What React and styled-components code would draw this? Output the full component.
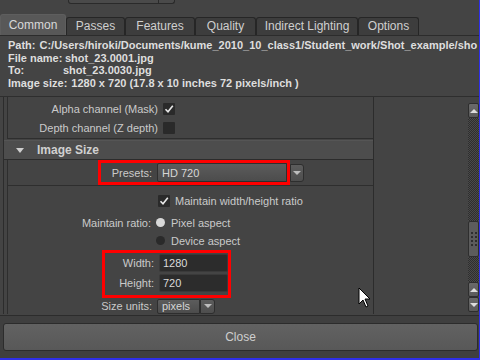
import React from "react";
import styled, { createGlobalStyle } from "styled-components";

const Global = createGlobalStyle`
  html, body { margin: 0; padding: 0; background: #444444; }
  body { font-family: "Liberation Sans", Tahoma, sans-serif; }
`;

const Window = styled.div`
  position: relative;
  width: 480px;
  height: 360px;
  background: #444444;
  display: flex;
  flex-direction: column;
  overflow: hidden;
  box-sizing: border-box;
  border-right: 1px solid #2f2fe8;
`;

const TopStrip = styled.div`
  height: 14px;
  display: flex;
  align-items: flex-start;
`;

const PrevButton = styled.div`
  margin-left: 68px;
  width: 105px;
  height: 3px;
  border: 1px solid #2a2a2a;
  border-top: 0;
  border-radius: 0 0 3px 3px;
  background: #4a4a4a;
  display: flex;
  justify-content: flex-end;
`;

const PrevDivider = styled.div`
  width: 15px;
  border-left: 1px solid #2a2a2a;
`;

const TabRow = styled.div`
  height: 21px;
  display: flex;
  align-items: flex-end;
  border-bottom: 1px solid #2c2c2c;
`;

const Tab = styled.div`
  box-sizing: border-box;
  width: ${(p) => p.w}px;
  height: ${(p) => (p.active ? 21 : 18)}px;
  display: flex;
  align-items: center;
  justify-content: center;
  font-size: 12px;
  color: ${(p) => (p.active ? "#d8d8d8" : "#cfcfcf")};
  background: ${(p) => (p.active ? "#585858" : "#3d3d3d")};
  border: 1px solid ${(p) => (p.active ? "#5e5e5e" : "#262626")};
  border-bottom: 0;
  border-radius: 3px 3px 0 0;
`;

const Info = styled.div`
  height: 61px;
  padding: 3px 0 0 8px;
  box-sizing: border-box;
  display: flex;
  flex-direction: column;
  font-size: 11px;
  font-weight: bold;
  color: #dedede;
  line-height: 12.7px;
  white-space: nowrap;
  overflow: hidden;
`;

const InfoLine = styled.div`
  display: flex;
`;

const InfoKey = styled.span`
  width: ${(p) => (p.w ? p.w + "px" : "auto")};
  margin-right: ${(p) => (p.w ? 0 : 4)}px;
`;

const ScrollRow = styled.div`
  height: 219px;
  display: flex;
  border-top: 1px solid #2e2e2e;
`;

const Content = styled.div`
  flex: 1;
  display: flex;
  flex-direction: column;
  padding-left: 3px;
  overflow: hidden;
`;

const Outer = styled.div`
  width: 369px;
  flex: 1;
  border-left: 1px solid #2c2c2c;
  border-right: 1px solid #2c2c2c;
  display: flex;
  flex-direction: column;
`;

const TopFrame = styled.div`
  height: 42px;
  margin-left: 3px;
  border-left: 1px solid #2e2e2e;
  border-bottom: 1px solid #2e2e2e;
  display: flex;
  flex-direction: column;
  justify-content: center;
  gap: 4px;
  padding-top: 2px;
  box-sizing: border-box;
`;

const Row = styled.div`
  display: flex;
  align-items: center;
  height: ${(p) => p.h || 15}px;
  margin-top: ${(p) => p.mt || 0}px;
  font-size: 11px;
  color: #cacaca;
`;

const Label = styled.div`
  width: ${(p) => p.w || 148}px;
  text-align: right;
  padding-right: 5px;
  box-sizing: border-box;
  white-space: nowrap;
`;

const Check = styled.div`
  width: 12px;
  height: 12px;
  background: #2a2a2a;
  border-radius: 1px;
  display: flex;
  align-items: center;
  justify-content: center;
  margin-right: 5px;
  flex: none;
`;

const Header = styled.div`
  height: 20px;
  margin-top: 1px;
  background: #4d4d4d;
  border-top: 1px solid #555;
  border-bottom: 1px solid #2c2c2c;
  display: flex;
  align-items: center;
  font-size: 12px;
  font-weight: bold;
  color: #d0d0d0;
  box-sizing: border-box;
`;

const Tri = styled.div`
  width: 0;
  height: 0;
  border-left: 4px solid transparent;
  border-right: 4px solid transparent;
  border-top: 5px solid #cfcfcf;
  margin: 0 13px 0 12px;
`;

const Frame = styled.div`
  flex: 1;
  margin-left: 3px;
  border-left: 1px solid #2e2e2e;
  display: flex;
  flex-direction: column;
`;

const PresetRow = styled.div`
  height: 25px;
  display: flex;
  align-items: center;
  border-bottom: 1px solid #2e2e2e;
`;

const Highlight = styled.div`
  border: 3px solid #ff0000;
  display: flex;
  flex-direction: column;
  margin-left: ${(p) => p.ml}px;
  width: ${(p) => (p.w ? p.w + "px" : "auto")};
  margin-top: ${(p) => p.mt || 0}px;
  padding-bottom: ${(p) => p.pb || 0}px;
  box-sizing: border-box;
`;

const DropField = styled.div`
  width: ${(p) => p.w}px;
  height: ${(p) => p.h || 19}px;
  background: linear-gradient(#5c5c5c, #4c4c4c);
  border: 1px solid #2e2e2e;
  border-radius: 2px 0 0 2px;
  box-sizing: border-box;
  display: flex;
  align-items: center;
  padding-left: 4px;
  color: #d6d6d6;
  font-size: 11px;
`;

const DropButton = styled.div`
  width: ${(p) => p.w || 14}px;
  height: ${(p) => p.h || 18}px;
  background: linear-gradient(#5c5c5c, #4e4e4e);
  border: 1px solid #2e2e2e;
  border-radius: 0 3px 3px 0;
  box-sizing: border-box;
  display: flex;
  align-items: center;
  justify-content: center;
`;

const DownTri = styled.div`
  width: 0;
  height: 0;
  border-left: 4px solid transparent;
  border-right: 4px solid transparent;
  border-top: 4px solid #bdbdbd;
`;

const Radio = styled.div`
  width: 9px;
  height: 9px;
  border-radius: 50%;
  background: ${(p) => (p.on ? "#d8d8d8" : "#2a2a2a")};
  margin: 0 6px 0 0;
  flex: none;
`;

const Field = styled.div`
  width: 69px;
  height: 18px;
  background: #2c2c2c;
  border: 1px solid #3a3a3a;
  border-radius: 2px;
  box-sizing: border-box;
  display: flex;
  align-items: center;
  padding-left: 3px;
  color: #dadada;
  font-size: 11px;
`;

const Scrollbar = styled.div`
  width: 11px;
  display: flex;
  flex-direction: column;
  padding-top: 6px;
  padding-bottom: 2px;
  box-sizing: border-box;
`;

const Track = styled.div`
  flex: ${(p) => p.f};
  background-color: #3a3a3a;
  background-image: repeating-conic-gradient(#2e2e2e 0 25%, #4a4a4a 0 50%);
  background-size: 2px 2px;
`;

const ArrowBtn = styled.div`
  height: 15px;
  background: linear-gradient(#6a6a6a, #5a5a5a);
  border: 1px solid #2e2e2e;
  border-radius: 2px;
  box-sizing: border-box;
  display: flex;
  align-items: center;
  justify-content: center;
`;

const UpTri = styled.div`
  width: 0;
  height: 0;
  border-left: 4px solid transparent;
  border-right: 4px solid transparent;
  border-bottom: 4px solid #dcdcdc;
`;

const DnTri = styled(UpTri)`
  border-bottom: 0;
  border-top: 4px solid #dcdcdc;
`;

const Thumb = styled.div`
  height: 36px;
  background: #5c5c5c;
  border: 1px solid #2e2e2e;
  border-radius: 2px;
  box-sizing: border-box;
  display: grid;
  grid-template-columns: repeat(2, 2px);
  grid-auto-rows: 2px;
  gap: 2px;
  align-content: center;
  justify-content: center;
`;

const Dot = styled.div`
  background: #2e2e2e;
`;

const BottomBar = styled.div`
  border-top: 1px solid #2c2c2c;
  margin-top: 1px;
  padding: 7px 1px 7px 3px;
  border-bottom: 2px solid #2f2fe8;
  flex: none;
  background: #3f3f3f;
`;

const CloseButton = styled.div`
  height: 26px;
  border: 1px solid #2c2c2c;
  border-radius: 3px;
  background: linear-gradient(#626262, #585858);
  display: flex;
  align-items: center;
  justify-content: center;
  color: #cfcfcf;
  font-size: 12px;
`;

const Cursor = styled.svg`
  position: absolute;
  left: 358px;
  top: 287px;
`;

const CheckMark = () => (
  <svg width="10" height="10" viewBox="0 0 10 10">
    <path d="M1.5 5.2 L4 7.8 L8.8 1.8" stroke="#e8e8e8" strokeWidth="1.6" fill="none" />
  </svg>
);

export default function App() {
  const tabs = [
    ["Common", 66],
    ["Passes", 59],
    ["Features", 70],
    ["Quality", 61],
    ["Indirect Lighting", 102],
    ["Options", 61],
  ];
  return (
    <>
      <Global />
      <Window>
        <TopStrip>
          <PrevButton>
            <PrevDivider />
          </PrevButton>
        </TopStrip>
        <TabRow>
          {tabs.map(([t, w], i) => (
            <Tab key={t} w={w} active={i === 0}>
              {t}
            </Tab>
          ))}
        </TabRow>
        <Info>
          <InfoLine>
            <InfoKey>Path:</InfoKey>C:/Users/hiroki/Documents/kume_2010_10_class1/Student_work/Shot_example/sho
          </InfoLine>
          <InfoLine>
            <InfoKey w={57}>File name:</InfoKey>shot_23.0001.jpg
          </InfoLine>
          <InfoLine>
            <InfoKey w={55}>To:</InfoKey>shot_23.0030.jpg
          </InfoLine>
          <InfoLine>
            <InfoKey>Image size:</InfoKey>1280 x 720 (17.8 x 10 inches 72 pixels/inch )
          </InfoLine>
        </Info>
        <ScrollRow>
          <Content>
            <Outer>
              <TopFrame>
                <Row>
                  <Label w={155}>Alpha channel (Mask)</Label>
                  <Check>
                    <CheckMark />
                  </Check>
                </Row>
                <Row>
                  <Label w={155}>Depth channel (Z depth)</Label>
                  <Check />
                </Row>
              </TopFrame>
              <Header>
                <Tri />
                Image Size
              </Header>
              <Frame>
                <PresetRow>
                  <Highlight ml={90}>
                    <Row h={19}>
                      <Label w={56}>Presets:</Label>
                      <DropField w={130}>HD 720</DropField>
                    </Row>
                  </Highlight>
                  <DropButton>
                    <DownTri />
                  </DropButton>
                </PresetRow>
                <Row h={19} mt={5}>
                  <Label w={150} />
                  <Check>
                    <CheckMark />
                  </Check>
                  Maintain width/height ratio
                </Row>
                <Row h={19} mt={3}>
                  <Label w={148}>Maintain ratio:</Label>
                  <Radio on />
                  Pixel aspect
                </Row>
                <Row h={17}>
                  <Label w={148} />
                  <Radio />
                  Device aspect
                </Row>
                <Highlight ml={94} w={129} mt={1} pb={2}>
                  <Row h={20}>
                    <Label w={54}>Width:</Label>
                    <Field>1280</Field>
                  </Row>
                  <Row h={20}>
                    <Label w={54}>Height:</Label>
                    <Field>720</Field>
                  </Row>
                </Highlight>
                <Row h={14} mt={1}>
                  <Label w={149}>Size units:</Label>
                  <DropField w={43} h={15}>pixels</DropField>
                  <DropButton w={15} h={15}>
                    <DownTri />
                  </DropButton>
                </Row>
              </Frame>
            </Outer>
          </Content>
          <Scrollbar>
            <ArrowBtn>
              <UpTri />
            </ArrowBtn>
            <Track f={102} />
            <Thumb>
              {Array.from({ length: 8 }).map((_, i) => (
                <Dot key={i} />
              ))}
            </Thumb>
            <Track f={25} />
            <ArrowBtn>
              <UpTri />
            </ArrowBtn>
            <ArrowBtn>
              <DnTri />
            </ArrowBtn>
          </Scrollbar>
        </ScrollRow>
        <BottomBar>
          <CloseButton>Close</CloseButton>
        </BottomBar>
        <Cursor width="14" height="22" viewBox="0 0 14 22">
          <path d="M1 1 L1 17 L5 13 L8 20 L10 19 L7 12 L12 12 Z" fill="#fff" stroke="#000" strokeWidth="1" />
        </Cursor>
      </Window>
    </>
  );
}
